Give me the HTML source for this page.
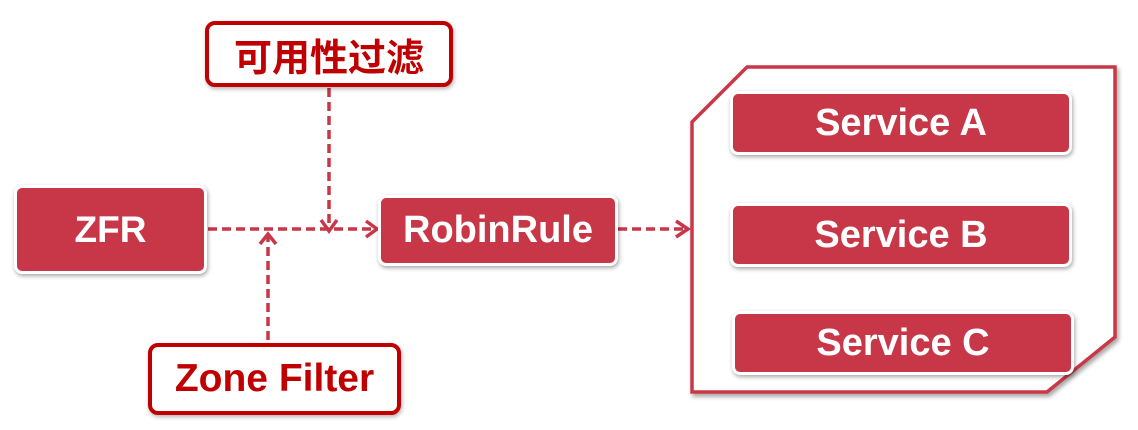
<!DOCTYPE html>
<html><head><meta charset="utf-8"><style>
body{margin:0;width:1138px;height:430px;background:#fff;overflow:hidden;position:relative;font-family:"Liberation Sans","Noto Sans CJK SC",sans-serif;font-weight:bold}
.f{position:absolute;background:#C83747;color:#fff;border-radius:8px;border:3px solid #fff;box-shadow:1px 2px 4px rgba(0,0,0,.35);display:flex;align-items:center;justify-content:center;font-size:38px;box-sizing:border-box}
.o{position:absolute;background:#fff;color:#C00000;border-radius:10px;border:4px solid #C00000;box-shadow:1px 2px 4px rgba(0,0,0,.3);display:flex;align-items:center;justify-content:center;font-size:38px;box-sizing:border-box}
svg{position:absolute;left:0;top:0}
</style></head><body>
<svg width="1138" height="430">
<defs><filter id="s"><feDropShadow dx="2" dy="3" stdDeviation="2" flood-opacity=".35"/></filter></defs>
<polygon points="692,122 747,67 1115,67 1115,337 1047,392 692,392" fill="#fff" stroke="#C83747" stroke-width="3.5" filter="url(#s)"/>
<g stroke="#C83747" stroke-width="3.5" fill="none" stroke-dasharray="9,5">
<line x1="208" y1="229" x2="376" y2="229"/>
<line x1="329" y1="88" x2="329" y2="227"/>
<line x1="268" y1="340" x2="268" y2="236"/>
<line x1="618" y1="229" x2="688" y2="229"/>
</g>
<g stroke="#C83747" stroke-width="3.5" fill="none">
<polyline points="366,221 377,229 366,237"/>
<polyline points="321,220 329,231 337,220"/>
<polyline points="260,244 268,234 276,244"/>
<polyline points="676,221 688,229 676,237"/>
</g>
</svg>
<div class="o" style="left:205px;top:21px;width:248px;height:66px">可用性过滤</div>
<div class="f" style="left:14px;top:185px;width:193px;height:89px;font-size:37px">ZFR</div>
<div class="f" style="left:378px;top:195px;width:240px;height:71px">RobinRule</div>
<div class="o" style="left:148px;top:343px;width:253px;height:72px;font-size:39px">Zone Filter</div>
<div class="f" style="left:730px;top:91px;width:342px;height:64px">Service A</div>
<div class="f" style="left:730px;top:203px;width:342px;height:64px">Service B</div>
<div class="f" style="left:732px;top:311px;width:342px;height:64px">Service C</div>
</body></html>
